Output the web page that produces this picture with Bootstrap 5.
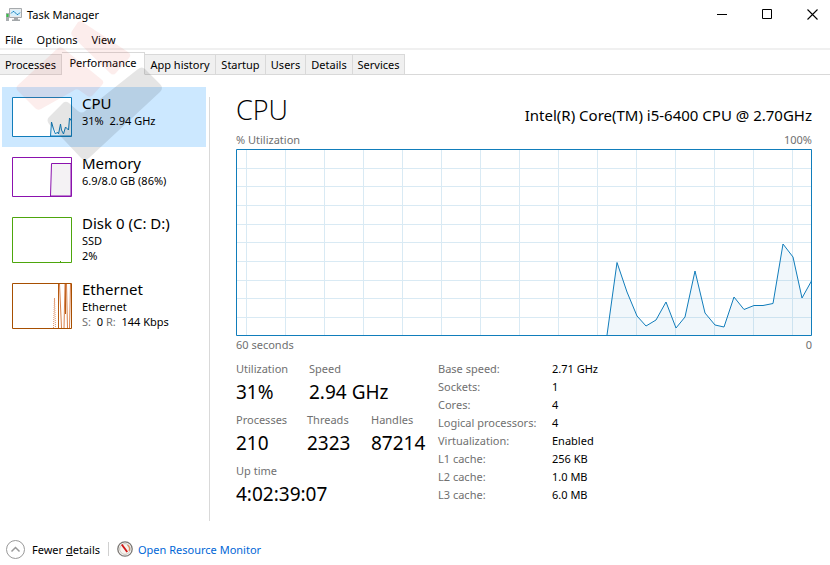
<!DOCTYPE html>
<html lang="en">
<head>
<meta charset="utf-8">
<meta name="viewport" content="width=device-width, initial-scale=1">
<title>Task Manager</title>
<link href="https://cdn.jsdelivr.net/npm/bootstrap@5.3.0/dist/css/bootstrap.min.css" rel="stylesheet">
<style>
body{font-family:"Segoe UI","Noto Sans","Open Sans",sans-serif;font-size:11px;line-height:15px;color:#000;background:#fff}
h1,h2,p,dl,dd,dt{margin:0;font-weight:400;line-height:inherit}
button{border:0;background:none;padding:0;color:inherit}
svg{display:block;flex:none}
.titlebar{height:29px;padding-left:6px;gap:5px}
.titlebar h1{font-size:11px}
.winbtns{gap:9px}
.winbtn{width:36px;height:29px}
.menubar{height:21px;padding:2px 5px 0;gap:14px;border-bottom:2px solid #f0f0f0}
.tabstrip{display:grid;grid-template-columns:62px 83px 71px 50px 40px 47px 52px 1fr;align-items:end;height:25px}
.tabstrip>*{height:21px;border-bottom:1px solid #d9d9d9}
.tabstrip button{background:#f0f0f0;border-top:1px solid #d9d9d9;border-right:1px solid #d9d9d9;white-space:nowrap}
.tabstrip .active{height:23px;background:#fff;border-bottom-color:#fff;padding-bottom:2px}
.resources{width:208px;padding:12px 2px 0}
.resource{padding:10px;gap:10px;text-align:left;width:100%}
.resource.active{background:#cce8ff}
.resource-name{font-size:15px;line-height:12px;padding-bottom:4px}
.thumb{background:#fff}
.muted{color:#707070}
.divider{width:1px;background:#d9d9d9;margin:22px 26px 12px 1px}
.detail{padding:21px 18px 0 0;min-width:0}
.title-row{margin-bottom:8px}
.heading{font-family:"Segoe UI","Open Sans","Noto Sans",sans-serif;font-size:27px;font-weight:300;line-height:28px}
.model{font-size:15px;line-height:18px}
.graph{width:100%;height:187px;margin:2px 0 1px}
.graph *{vector-effect:non-scaling-stroke}
.figures{margin-top:8px}
.stats{padding-top:1px}
.figures dt{line-height:16px}
.figures dd{font-size:19px;line-height:31px;margin-bottom:4px}
.stats{width:202px}
.trio{display:grid;grid-template-columns:71px 64px 1fr}
.duo{display:grid;grid-template-columns:73px 1fr}
.figures .specs{display:grid;grid-template-columns:114px auto;align-content:start}
.figures .specs dt,.figures .specs dd{font-size:11px;line-height:18px;margin:0}
.footerbar{height:32px;padding-left:6px;gap:8px}
.footerbar button{gap:7px}
.sep{width:1px;height:14px;background:#d0d0d0}
.footerbar a{color:#0066d6;text-decoration:none;gap:5px}
.watermark{position:absolute;left:0;top:0;pointer-events:none}
</style>
<script src="https://cdn.jsdelivr.net/npm/bootstrap@5.3.0/dist/js/bootstrap.bundle.min.js"></script>
</head>
<body class="d-flex flex-column min-vh-100 position-relative">
<header class="titlebar d-flex align-items-center">
  <svg width="16" height="14" viewBox="0 0 16 14" aria-hidden="true"><path d="M0 5h3v8H0z" fill="#a9adb0"/><path d="M.5 6h2v3h-2z" fill="#35c044"/><path d="M3.500.5h12v9h-12z" fill="#e8eaeb" stroke="#a6aaad"/><path d="M5 2h9v6H5z" fill="#d4effc"/><path d="M5 5.500l2-2h1l3 3h1l2-2" fill="none" stroke="#1581bd"/><path d="M8 10h4v1.500h2V13H6v-1.500h2z" fill="#a3a7aa"/></svg>
  <h1 class="flex-grow-1">Task Manager</h1>
  <div class="winbtns d-flex">
  <button class="winbtn d-flex align-items-center justify-content-center" aria-label="Minimize"><svg width="10" height="11"><path d="M0 5.500h10" stroke="#000"/></svg></button>
  <button class="winbtn d-flex align-items-center justify-content-center" aria-label="Maximize"><svg width="10" height="11"><path d="M.5 .5h9v9h-9z" fill="none" stroke="#000"/></svg></button>
  <button class="winbtn d-flex align-items-center justify-content-center" aria-label="Close"><svg width="11" height="11"><path d="M.5.5l10 10m0-10l-10 10" stroke="#000" stroke-width="1.100"/></svg></button>
  </div>
</header>
<nav class="menubar d-flex align-items-center" aria-label="Menu"><button>File</button><button>Options</button><button>View</button></nav>
<nav class="tabstrip" aria-label="Views"><button>Processes</button><button class="active">Performance</button><button>App history</button><button>Startup</button><button>Users</button><button>Details</button><button>Services</button><span></span></nav>
<main class="d-flex flex-grow-1">
<nav class="resources flex-shrink-0" aria-label="Resources">
  <button class="resource active d-flex">
    <svg class="thumb" width="60" height="40" aria-hidden="true"><path d="M38.500 39l1-14 2 7 2 5 2-2 1 2 2-10 1 6 2 4 2-7 2 2 1 1 1-12 2 3v15z" fill="#e2ecf4" stroke="#117dbb"/><path d="M.5.5h59v39h-59z" fill="none" stroke="#117dbb"/></svg>
    <span><span class="resource-name d-block">CPU</span>31%&nbsp; 2.94 GHz</span>
  </button>
  <button class="resource d-flex">
    <svg class="thumb" width="60" height="40" aria-hidden="true"><path d="M38.500 39l1-32.500H59V39z" fill="#f4f2f4" stroke="#8b12ae"/><path d="M.5.5h59v39h-59z" fill="none" stroke="#8b12ae"/></svg>
    <span><span class="resource-name d-block">Memory</span>6.9/8.0 GB (86%)</span>
  </button>
  <button class="resource d-flex">
    <svg class="thumb" width="60" height="46" aria-hidden="true"><path d="M48 44.500h1" stroke="#4da60c"/><path d="M.5.5h59v45h-59z" fill="none" stroke="#4da60c"/></svg>
    <span><span class="resource-name d-block">Disk 0 (C: D:)</span><span class="d-block">SSD</span><span class="d-block">2%</span></span>
  </button>
  <button class="resource d-flex">
    <svg class="thumb" width="60" height="46" aria-hidden="true"><path d="M41.500 45l1-30 1 30" fill="none" stroke="#e0936a" stroke-dasharray="1 1"/><path d="M46.500 1v44M53.500 1v30" stroke="#b55a10"/><path d="M47.500 1l2 44M52 45l1-44M54.500 1l1 44M57.500 45l1-44" fill="none" stroke="#d9814c"/><path d="M.5.5h59v45h-59z" fill="none" stroke="#a74f01"/></svg>
    <span><span class="resource-name d-block">Ethernet</span><span class="d-block">Ethernet</span><span class="d-block"><span class="muted">S:</span>&nbsp; 0 <span class="muted">R:</span>&nbsp; 144 Kbps</span></span>
  </button>
</nav>
<div class="divider flex-shrink-0"></div>
<section class="detail flex-grow-1">
  <div class="title-row d-flex justify-content-between align-items-end"><h2 class="heading">CPU</h2><p class="model">Intel(R) Core(TM) i5-6400 CPU @ 2.70GHz</p></div>
  <div class="muted d-flex justify-content-between"><span>% Utilization</span><span>100%</span></div>
  <svg class="graph" viewBox="0 0 576 187" preserveAspectRatio="none" role="img" aria-label="CPU utilization over 60 seconds">
    <path d="M10.500 0v187M49.500 0v187M88.500 0v187M127.500 0v187M166.500 0v187M205.500 0v187M244.500 0v187M283.500 0v187M322.500 0v187M361.500 0v187M400.500 0v187M439.500 0v187M478.500 0v187M517.500 0v187M556.500 0v187M0 19.500h576M0 37.500h576M0 56.500h576M0 75.500h576M0 93.500h576M0 112.500h576M0 131.500h576M0 149.500h576M0 168.500h576" stroke="#d9eaf4"/>
    <path d="M371 186L381 113.500 391 143 401 167 410 177 420 171 430 153 440 179 449 168 459 122 469 164 479 176 488 178 498 148 508 160.500 518 156.500 527 156.500 537 154.500 547 95 557 108 566 149 576 131V186z" fill="#117dbb" fill-opacity=".06"/>
    <path d="M371 186L381 113.500 391 143 401 167 410 177 420 171 430 153 440 179 449 168 459 122 469 164 479 176 488 178 498 148 508 160.500 518 156.500 527 156.500 537 154.500 547 95 557 108 566 149 576 131" fill="none" stroke="#117dbb"/>
    <path d="M.5.5h575v186H.5z" fill="none" stroke="#117dbb"/>
  </svg>
  <div class="muted d-flex justify-content-between"><span>60 seconds</span><span>0</span></div>
  <div class="figures d-flex">
    <div class="stats flex-shrink-0">
      <dl class="duo"><div><dt class="muted">Utilization</dt><dd>31%</dd></div><div><dt class="muted">Speed</dt><dd>2.94 GHz</dd></div></dl>
      <dl class="trio"><div><dt class="muted">Processes</dt><dd>210</dd></div><div><dt class="muted">Threads</dt><dd>2323</dd></div><div><dt class="muted">Handles</dt><dd>87214</dd></div></dl>
      <dl><dt class="muted">Up time</dt><dd>4:02:39:07</dd></dl>
    </div>
    <dl class="specs">
      <dt class="muted">Base speed:</dt><dd>2.71 GHz</dd>
      <dt class="muted">Sockets:</dt><dd>1</dd>
      <dt class="muted">Cores:</dt><dd>4</dd>
      <dt class="muted">Logical processors:</dt><dd>4</dd>
      <dt class="muted">Virtualization:</dt><dd>Enabled</dd>
      <dt class="muted">L1 cache:</dt><dd>256 KB</dd>
      <dt class="muted">L2 cache:</dt><dd>1.0 MB</dd>
      <dt class="muted">L3 cache:</dt><dd>6.0 MB</dd>
    </dl>
  </div>
</section>
</main>
<footer class="footerbar d-flex align-items-center">
  <button class="d-flex align-items-center"><svg width="19" height="19" viewBox="0 0 19 19" aria-hidden="true"><circle cx="9.500" cy="9.500" r="9" fill="#fff" stroke="#999"/><path d="M5.500 11.500l4-4 4 4" fill="none" stroke="#999" stroke-width="1.500"/></svg><span>Fewer <u>d</u>etails</span></button>
  <span class="sep"></span>
  <a href="#" class="d-flex align-items-center"><svg width="16" height="16" viewBox="0 0 16 16" aria-hidden="true"><circle cx="8" cy="8" r="7.200" fill="#fff" stroke="#7b7773" stroke-width="1.300"/><circle cx="8" cy="8" r="5.400" fill="#f7f3ee" stroke="#c9c3bc"/><path d="M10.500 4a5 5 0 0 1 1.500 6" fill="none" stroke="#d98b5f" stroke-width="1.200"/><path d="M4 4l1.500-1 5.500 7.500-1.500 1z" fill="#d01616"/></svg>Open Resource Monitor</a>
</footer>
<svg class="watermark" width="165" height="162" viewBox="0 0 165 162" aria-hidden="true">
  <g fill="#e03c28" fill-opacity=".09"><path d="M78 22q3-2 6 1l44 29q4 3 1 6L116 73q-3 3-6 0L73 37q-3-3-1-6z"/><path d="M58 48q3-2 6 1l37 30q4 3 1 6L92 96q-3 2-6-1l-7-5q-3-2-6 1L41 109q-3 2-6-1L18 91q-3-3 0-6z"/></g>
  <path d="M138 69q4-3 7 0l15 15q4 4 0 8L89 158q-4 4-8 0L49 124q-3-4 0-7L62 104q3-4 7-1l9 8q4 3 7 0z" fill="#000" fill-opacity=".1"/>
</svg>
</body></html>
